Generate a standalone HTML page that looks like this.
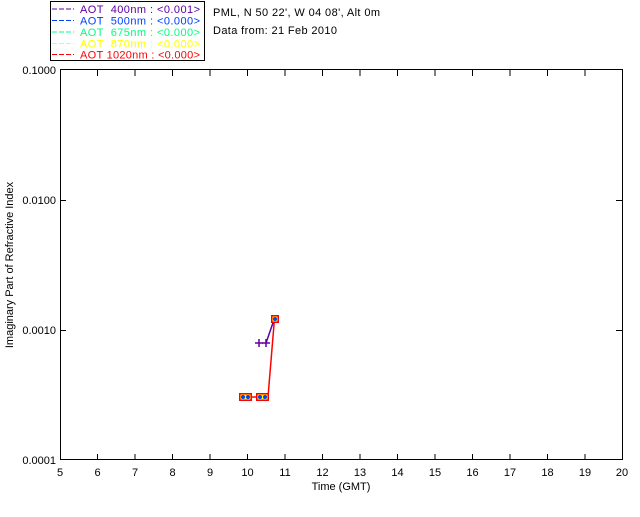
<!DOCTYPE html>
<html><head><style>
body{margin:0;background:#fff;width:640px;height:512px;overflow:hidden}
svg text{font-family:"Liberation Sans",sans-serif;font-size:11px}
</style></head><body>
<svg width="640" height="512" xmlns="http://www.w3.org/2000/svg">
<rect x="50.5" y="1.5" width="154" height="59" fill="#fff" stroke="#000"/>
<g stroke-dasharray="5,2" stroke-width="1">
<line x1="52" y1="9" x2="74" y2="9" stroke="#6000a0"/>
<line x1="52" y1="20.5" x2="74" y2="20.5" stroke="#0040ff"/>
<line x1="52" y1="32" x2="74" y2="32" stroke="#00ff80"/>
<line x1="52" y1="43.5" x2="74" y2="43.5" stroke="#ffff00"/>
<line x1="52" y1="54.5" x2="74" y2="54.5" stroke="#ff0000"/>
</g>
<g textLength="120">
<text x="80" y="13" fill="#6000a0" xml:space="preserve" textLength="120">AOT  400nm : &lt;0.001&gt;</text>
<text x="80" y="24.5" fill="#0040ff" xml:space="preserve" textLength="120">AOT  500nm : &lt;0.000&gt;</text>
<text x="80" y="36" fill="#00ff80" xml:space="preserve" textLength="120">AOT  675nm : &lt;0.000&gt;</text>
<text x="80" y="47.5" fill="#ffff00" xml:space="preserve" textLength="120">AOT  870nm : &lt;0.000&gt;</text>
<text x="80" y="58.5" fill="#ff0000" xml:space="preserve" textLength="120">AOT 1020nm : &lt;0.000&gt;</text>
</g>
<text x="213" y="16" textLength="167">PML, N 50 22', W 04 08', Alt 0m</text>
<text x="213" y="34" textLength="124">Data from: 21 Feb 2010</text>
<rect x="60.5" y="69.5" width="562" height="390" fill="none" stroke="#000"/>
<g stroke="#000">
<line x1="60" y1="200.5" x2="66" y2="200.5"/><line x1="60" y1="330.5" x2="66" y2="330.5"/>
<line x1="616" y1="200.5" x2="622" y2="200.5"/><line x1="616" y1="330.5" x2="622" y2="330.5"/>
<line x1="97.5" y1="454" x2="97.5" y2="460"/><line x1="97.5" y1="70" x2="97.5" y2="76"/>
<line x1="135" y1="454" x2="135" y2="460"/><line x1="135" y1="70" x2="135" y2="76"/>
<line x1="172.5" y1="454" x2="172.5" y2="460"/><line x1="172.5" y1="70" x2="172.5" y2="76"/>
<line x1="210" y1="454" x2="210" y2="460"/><line x1="210" y1="70" x2="210" y2="76"/>
<line x1="247.5" y1="454" x2="247.5" y2="460"/><line x1="247.5" y1="70" x2="247.5" y2="76"/>
<line x1="285" y1="454" x2="285" y2="460"/><line x1="285" y1="70" x2="285" y2="76"/>
<line x1="322.5" y1="454" x2="322.5" y2="460"/><line x1="322.5" y1="70" x2="322.5" y2="76"/>
<line x1="360" y1="454" x2="360" y2="460"/><line x1="360" y1="70" x2="360" y2="76"/>
<line x1="397.5" y1="454" x2="397.5" y2="460"/><line x1="397.5" y1="70" x2="397.5" y2="76"/>
<line x1="435" y1="454" x2="435" y2="460"/><line x1="435" y1="70" x2="435" y2="76"/>
<line x1="472.5" y1="454" x2="472.5" y2="460"/><line x1="472.5" y1="70" x2="472.5" y2="76"/>
<line x1="510" y1="454" x2="510" y2="460"/><line x1="510" y1="70" x2="510" y2="76"/>
<line x1="547.5" y1="454" x2="547.5" y2="460"/><line x1="547.5" y1="70" x2="547.5" y2="76"/>
<line x1="585" y1="454" x2="585" y2="460"/><line x1="585" y1="70" x2="585" y2="76"/>
</g>
<g text-anchor="end">
<text x="56" y="74">0.1000</text><text x="56" y="204">0.0100</text>
<text x="56" y="334">0.0010</text><text x="56" y="464">0.0001</text>
</g>
<g text-anchor="middle">
<text x="60" y="476">5</text><text x="97.5" y="476">6</text><text x="135" y="476">7</text><text x="172.5" y="476">8</text><text x="210" y="476">9</text><text x="247.5" y="476">10</text><text x="285" y="476">11</text><text x="322.5" y="476">12</text><text x="360" y="476">13</text><text x="397.5" y="476">14</text><text x="435" y="476">15</text><text x="472.5" y="476">16</text><text x="510" y="476">17</text><text x="547.5" y="476">18</text><text x="585" y="476">19</text><text x="622" y="476">20</text>
<text x="341" y="490">Time (GMT)</text>
<text transform="translate(13,265) rotate(-90)">Imaginary Part of Refractive Index</text>
</g>
<polyline points="243,397 262,397 268,397 274.5,318.5" fill="none" stroke="#f00" stroke-width="1.5"/>
<polyline points="266,343 274.5,318.5" fill="none" stroke="#6000a0" stroke-width="1.5"/>
<g stroke="#6000a0" stroke-width="1.5">
<line x1="255" y1="343" x2="263" y2="343"/><line x1="259" y1="339" x2="259" y2="347"/>
<line x1="262" y1="343" x2="270" y2="343"/><line x1="266" y1="339" x2="266" y2="347"/>
</g>
<g>
<rect x="239" y="393" width="13" height="8" fill="#f00"/><rect x="240.5" y="394.5" width="10" height="5" fill="#ff0"/>
<circle cx="243" cy="397" r="2" fill="#0040ff"/><circle cx="248" cy="397" r="2" fill="#0040ff"/>
<rect x="256" y="393" width="13" height="8" fill="#f00"/><rect x="257.5" y="394.5" width="10" height="5" fill="#ff0"/>
<circle cx="260" cy="397" r="2" fill="#0040ff"/><circle cx="265" cy="397" r="2" fill="#0040ff"/>
<rect x="271" y="315" width="8" height="8" fill="#f00"/><rect x="272.5" y="316.5" width="5" height="5" fill="#ff0"/>
<circle cx="275" cy="319" r="2" fill="#0040ff"/>
</g>
</svg>
</body></html>
